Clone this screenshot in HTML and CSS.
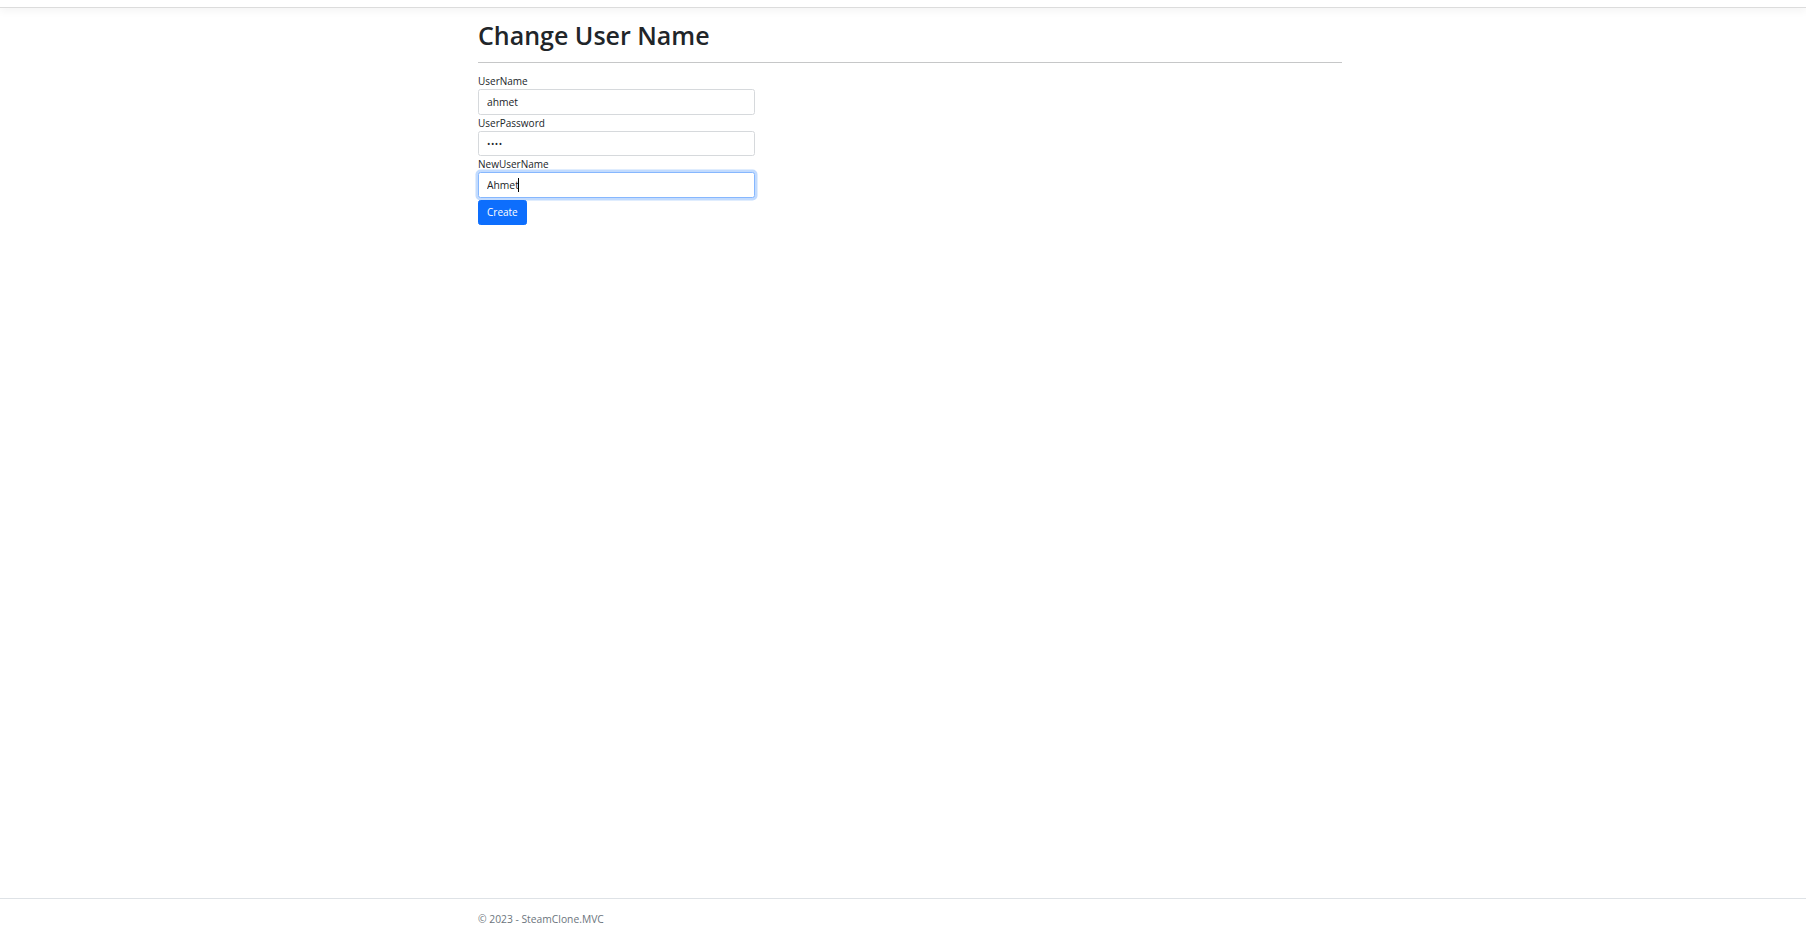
FILE: index.html
```html
<!DOCTYPE html>
<html lang="en">
<head>
<meta charset="utf-8">
<title>Change User Name - SteamClone.MVC</title>
<link rel="stylesheet" href="styles.css">
</head>
<body>
<header class="navbar"></header>
<main class="main">
  <div class="container">
    <h2 class="title">Change User Name</h2>
    <hr class="rule">
    <form class="form">
      <div class="form-group">
        <label class="control-label">UserName</label>
        <input class="form-control" type="text" value="ahmet">
      </div>
      <div class="form-group">
        <label class="control-label">UserPassword</label>
        <input class="form-control" type="password" value="1234">
      </div>
      <div class="form-group">
        <label class="control-label">NewUserName</label>
        <div class="input-wrap">
          <input class="form-control is-focused" type="text" value="Ahmet">
          <span class="caret"></span>
        </div>
      </div>
      <div class="form-group">
        <button type="button" class="btn btn-primary">Create</button>
      </div>
    </form>
  </div>
</main>
<footer class="footer">
  <div class="container">© 2023 - SteamClone.MVC</div>
</footer>
</body>
</html>
```
FILE: styles.css
```css
* { box-sizing: border-box; }
html, body { height: 100%; }
body {
  margin: 0;
  font-family: "Open Sans", "Noto Sans", "Liberation Sans", sans-serif;
  font-size: 10.67px;
  line-height: 1.5;
  color: #212529;
  background: #fff;
  display: flex;
  flex-direction: column;
  min-height: 100vh;
}
.navbar {
  height: 8px;
  border-bottom: 1px solid #dcdcdc;
  box-shadow: 0 3px 8px rgba(0,0,0,0.05);
  flex: none;
}
.main { flex: 1; }
.container {
  width: 864px;
  margin-left: 478px;
}
.title {
  margin: 12px 0 5px;
  font-size: 25px;
  font-weight: 600;
  line-height: 1.2;
}
.rule {
  margin: 12px 0 10px;
  border: 0;
  border-top: 1px solid #c6c7c8;
}
.form { width: 277px; }
.form-group { display: block; }
.control-label {
  display: inline-block;
  font-size: 10px;
  line-height: 16px;
}
.input-wrap { position: relative; }
.form-control {
  display: block;
  width: 100%;
  height: 25.5px;
  padding: 3px 8px;
  font-family: inherit;
  font-size: 10.3px;
  line-height: 16px;
  color: #212529;
  background: #fff;
  border: 1px solid #d6d9dc;
  border-radius: 2.5px;
  outline: none;
}
.form-control[type="password"] { letter-spacing: 0.5px; font-size: 9px; }
.is-focused {
  border-color: #86b7fe;
  box-shadow: 0 0 0 2.5px rgba(13,110,253,0.25);
}
.caret {
  position: absolute;
  left: 40px;
  top: 6px;
  width: 1px;
  height: 14px;
  background: #000;
}
.btn {
  display: inline-block;
  margin-top: 2px;
  height: 25px;
  padding: 0 8px;
  font-family: inherit;
  font-size: 10px;
  line-height: 23px;
  border: 1px solid transparent;
  border-radius: 2.5px;
  cursor: pointer;
}
.btn-primary {
  color: #fff;
  background: #0d6efd;
  border-color: #0d6efd;
}
.footer {
  flex: none;
  height: 38px;
  padding-top: 1px;
  border-top: 1px solid #dee2e6;
  color: #6c757d;
  font-size: 10.3px;
  line-height: 38px;
  white-space: nowrap;
}
```
